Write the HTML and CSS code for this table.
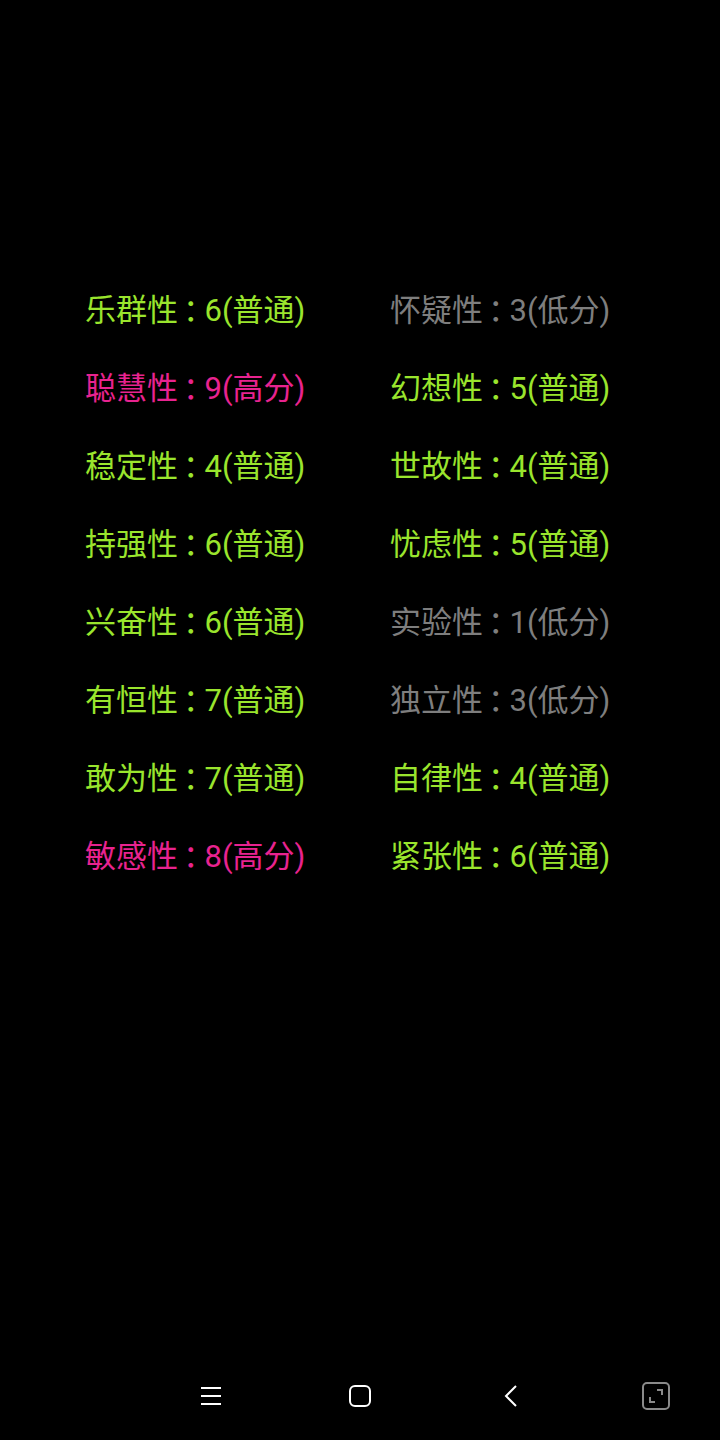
FILE: index.html
```html
<!DOCTYPE html>
<html lang="zh-CN">
<head>
<meta charset="utf-8">
<link rel="stylesheet" href="styles.css">
</head>
<body>
<div class="screen">
  <main class="grid">
    <div class="item normal">乐群性<span class="colon">：</span>6(普通)</div>
    <div class="item low">怀疑性<span class="colon">：</span>3(低分)</div>
    <div class="item high">聪慧性<span class="colon">：</span>9(高分)</div>
    <div class="item normal">幻想性<span class="colon">：</span>5(普通)</div>
    <div class="item normal">稳定性<span class="colon">：</span>4(普通)</div>
    <div class="item normal">世故性<span class="colon">：</span>4(普通)</div>
    <div class="item normal">持强性<span class="colon">：</span>6(普通)</div>
    <div class="item normal">忧虑性<span class="colon">：</span>5(普通)</div>
    <div class="item normal">兴奋性<span class="colon">：</span>6(普通)</div>
    <div class="item low">实验性<span class="colon">：</span>1(低分)</div>
    <div class="item normal">有恒性<span class="colon">：</span>7(普通)</div>
    <div class="item low">独立性<span class="colon">：</span>3(低分)</div>
    <div class="item normal">敢为性<span class="colon">：</span>7(普通)</div>
    <div class="item normal">自律性<span class="colon">：</span>4(普通)</div>
    <div class="item high">敏感性<span class="colon">：</span>8(高分)</div>
    <div class="item normal">紧张性<span class="colon">：</span>6(普通)</div>
  </main>
  <nav class="navbar">
    <span class="nav-btn">
      <svg width="24" height="24" viewBox="0 0 24 24"><path d="M2 4h20M2 12h20M2 20h20" stroke="#fff" stroke-width="2" fill="none"/></svg>
    </span>
    <span class="nav-btn">
      <svg width="24" height="24" viewBox="0 0 24 24"><rect x="2" y="2" width="20" height="20" rx="5" stroke="#fff" stroke-width="2" fill="none"/></svg>
    </span>
    <span class="nav-btn">
      <svg width="24" height="24" viewBox="0 0 24 24"><path d="M17 2L7 12l10 10" stroke="#fff" stroke-width="2" fill="none"/></svg>
    </span>
    <span class="nav-btn">
      <svg width="30" height="30" viewBox="0 0 30 30"><rect x="2" y="2" width="26" height="26" rx="4" stroke="#8a8a8a" stroke-width="2" fill="none"/><path d="M16 9h5v5M9 16v5h5" stroke="#8a8a8a" stroke-width="2" fill="none"/></svg>
    </span>
  </nav>
</div>
</body>
</html>
```
FILE: styles.css
```css
html, body {
  margin: 0;
  padding: 0;
  background: #000;
}
.screen {
  width: 720px;
  height: 1440px;
  display: flex;
  flex-direction: column;
  font-family: Roboto, "Noto Sans CJK SC", sans-serif;
}
.grid {
  display: grid;
  grid-template-columns: 305px 305px;
  grid-auto-rows: 78px;
  padding: 272px 0 0 85px;
  flex: 1;
  align-content: start;
}
.item {
  font-size: 31px;
  line-height: 78px;
  white-space: nowrap;
}
.colon {
  font-feature-settings: "halt";
  margin-left: 5px;
  margin-right: 6px;
}
.normal { color: #9ae52d; }
.high { color: #e8238f; }
.low { color: #7e7e7e; }
.navbar {
  height: 84px;
  display: flex;
  align-items: center;
  padding-bottom: 2px;
}
.nav-btn {
  display: flex;
  align-items: center;
  justify-content: center;
}
.nav-btn:nth-child(1) { margin-left: 199px; width: 24px; }
.nav-btn:nth-child(2) { margin-left: 125px; width: 24px; }
.nav-btn:nth-child(3) { margin-left: 127px; width: 24px; }
.nav-btn:nth-child(4) { margin-left: 118px; width: 30px; }
```
